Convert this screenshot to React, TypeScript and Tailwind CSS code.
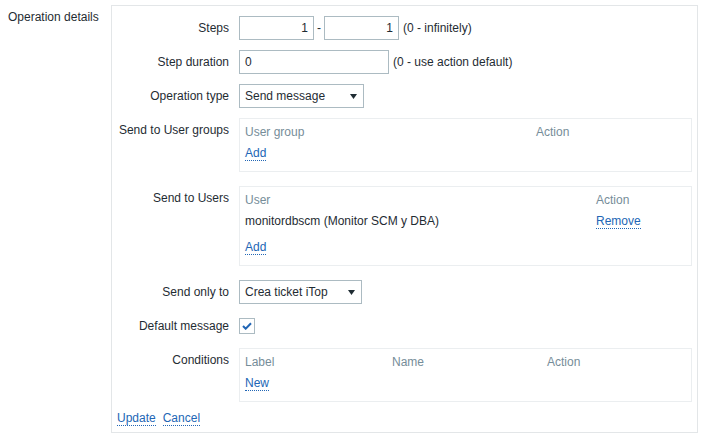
import type { ReactNode } from 'react'

// Zabbix-like "Operation details" form block.

function Row({ label, children, className = '' }: { label: string; children: ReactNode; className?: string }) {
  return (
    <div className={`flex items-start ${className}`}>
      <div className="w-[117px] shrink-0 pt-[5px] text-right">{label}</div>
      <div className="ml-[10px] flex items-center">{children}</div>
    </div>
  )
}

function Link({ children }: { children: ReactNode }) {
  return (
    <span className="inline-block border-b border-dotted border-[#2266b5] leading-[14px] text-[#2266b5]">
      {children}
    </span>
  )
}

function Input({ value, w, right = false }: { value: string; w: string; right?: boolean }) {
  return (
    <div
      className={`flex h-[24px] items-center border border-[#acbbc2] bg-white px-[5px] ${w} ${right ? 'justify-end' : ''}`}
    >
      {value}
    </div>
  )
}

function Select({ value, w }: { value: string; w: string }) {
  return (
    <div className={`flex h-[24px] items-center justify-between border border-[#acbbc2] bg-white pl-[5px] pr-[6px] ${w}`}>
      <span>{value}</span>
      <svg width="7" height="5" viewBox="0 0 7 5" aria-hidden>
        <path d="M0 0h7L3.5 5z" fill="#1f2c33" />
      </svg>
    </div>
  )
}

function Box({ children, className = '' }: { children: ReactNode; className?: string }) {
  return (
    <div className={`w-[453px] border border-[#ebeef0] px-[5px] pt-[6px] pb-[10px] ${className}`}>{children}</div>
  )
}

export default function App() {
  return (
    <div className="flex min-h-[440px] bg-white pt-[5px] font-['Liberation_Sans',Arial,sans-serif] text-[12px] leading-[14px] text-[#1f2c33]">
      <div className="w-[111px] shrink-0 pl-[8px] pt-[5px]">Operation details</div>

      <div className="h-[428px] w-[587px] border border-[#e3e6e8] pt-[10px]">
        <Row label="Steps">
          <Input value="1" w="w-[75px]" right />
          <span className="mx-[3px]">-</span>
          <Input value="1" w="w-[75px]" right />
          <span className="ml-[4px]">(0 - infinitely)</span>
        </Row>

        <Row label="Step duration" className="mt-[10px]">
          <Input value="0" w="w-[150px]" />
          <span className="ml-[4px]">(0 - use action default)</span>
        </Row>

        <Row label="Operation type" className="mt-[10px]">
          <Select value="Send message" w="w-[125px]" />
        </Row>

        <Row label="Send to User groups" className="mt-[10px]">
          <Box>
            <div className="flex text-[#768d99]">
              <span className="w-[291px]">User group</span>
              <span>Action</span>
            </div>
            <div className="mt-[7px]">
              <Link>Add</Link>
            </div>
          </Box>
        </Row>

        <Row label="Send to Users" className="mt-[14px]">
          <Box>
            <div className="flex text-[#768d99]">
              <span className="w-[351px]">User</span>
              <span>Action</span>
            </div>
            <div className="mt-[7px] flex">
              <span className="w-[351px]">monitordbscm (Monitor SCM y DBA)</span>
              <Link>Remove</Link>
            </div>
            <div className="mt-[11px]">
              <Link>Add</Link>
            </div>
          </Box>
        </Row>

        <Row label="Send only to" className="mt-[14px]">
          <Select value="Crea ticket iTop" w="w-[123px]" />
        </Row>

        <Row label="Default message" className="mt-[10px]">
          <div className="flex h-[24px] items-center">
            <div className="flex h-[16px] w-[16px] items-center justify-center border border-[#acbbc2] bg-white">
              <svg width="10" height="8" viewBox="0 0 10 8" aria-hidden>
                <path d="M1 4l2.7 2.7L9 1.2" fill="none" stroke="#2266b5" strokeWidth="2" />
              </svg>
            </div>
          </div>
        </Row>

        <Row label="Conditions" className="mt-[10px]">
          <Box>
            <div className="flex text-[#768d99]">
              <span className="w-[147px]">Label</span>
              <span className="w-[155px]">Name</span>
              <span>Action</span>
            </div>
            <div className="mt-[7px]">
              <Link>New</Link>
            </div>
          </Box>
        </Row>

        <div className="mt-[9px] flex gap-[7px] pl-[5px]">
          <Link>Update</Link>
          <Link>Cancel</Link>
        </div>
      </div>
    </div>
  )
}
